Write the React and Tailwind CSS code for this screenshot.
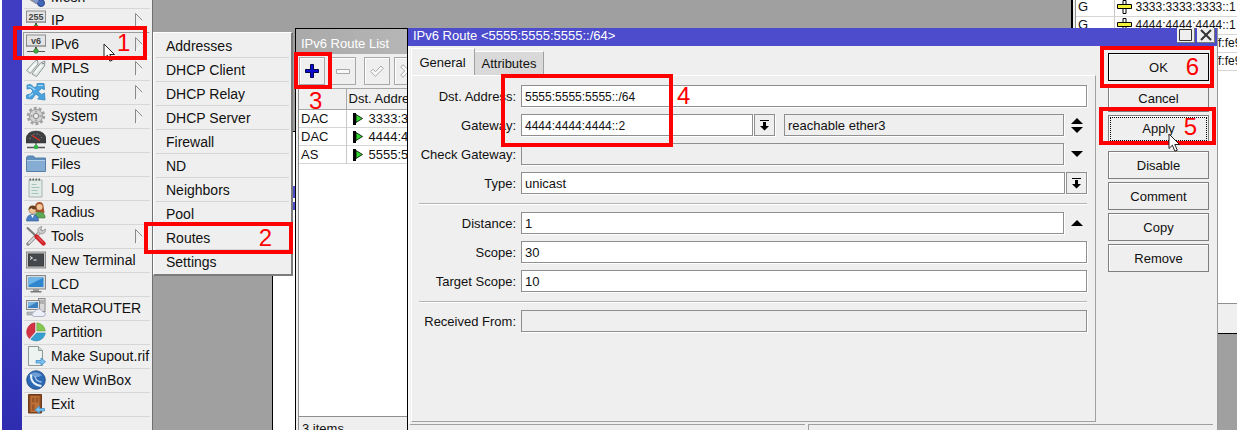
import React from "react";

const RED = "pointer-events-none absolute border-4 border-[#fe0000]";
const DIGIT = "pointer-events-none absolute text-2xl leading-6 text-[#fe0000]";

/* ---------- icons of the main menu ---------- */

function Svg({ children, className = "size-5" }) {
  return (
    <svg viewBox="0 0 20 20" className={className + " shrink-0"} aria-hidden="true">
      {children}
    </svg>
  );
}

function NetBox({ label }) {
  return (
    <Svg>
      <rect x="0.500" y="1" width="19" height="11.500" fill="#e4e4e4" stroke="#8d8d8d" />
      <rect x="1" y="11" width="18" height="2" fill="#a5a5a5" />
      <text x="10" y="9.800" textAnchor="middle" fontSize="9" fontWeight="bold" fill="#444" fontFamily="Liberation Sans, sans-serif">
        {label}
      </text>
      <path d="M10 13v3" stroke="#555" strokeWidth="2" />
      <path d="M1 17.500h18" stroke="#555" />
      <circle cx="10" cy="17" r="2.300" fill="#3fae3f" stroke="#2d6b2d" strokeWidth="0.600" />
    </Svg>
  );
}

const ICONS = {
  mesh: (
    <Svg>
      <path d="M4 12l6 4 6-1M10 16l4-8" stroke="#8a8a8a" strokeWidth="2" fill="none" />
      <circle cx="15" cy="16" r="3.500" fill="#4468b8" stroke="#2a4488" />
      <circle cx="10" cy="13.500" r="2.500" fill="#7f98d0" />
    </Svg>
  ),
  ip: <NetBox label="255" />,
  ipv6: <NetBox label="v6" />,
  mpls: (
    <Svg>
      <path d="M.5 12.500L8.500 3.500l3-1.500.5 4L4.500 15.500z" fill="#e8eeec" stroke="#8d9997" />
      <path d="M6 16L14.500 5l4.500-2-.5 5L10.500 18.500z" fill="#e2e9e7" stroke="#8d9997" />
      <path d="M8.500 15l7-7.500M3.500 12l6-6" stroke="#fff" strokeWidth="1.200" />
      <circle cx="17" cy="5.500" r=".8" fill="#67716f" />
    </Svg>
  ),
  routing: (
    <Svg>
      <path d="M1 3l4-.5 3 3 3-1V1.500l7 0 .5 6-3-1-3.500 3 3.500 3L18.500 11l.5 7-7.500-1 2-2-3.500-3-4 5-5.500-.5V13l4-1 2.500-3-2.500-2.500L1 7z" fill="#4aa3df" stroke="#3a86bd" strokeWidth=".8" />
      <path d="M2 4.500l3 .5 4 3M12 3.500l5 0M3 14.500l4-3" stroke="#a8dbf7" strokeWidth="1.200" fill="none" />
    </Svg>
  ),
  system: (
    <Svg>
      <circle cx="10" cy="10" r="7.800" fill="none" stroke="#a2a2a2" strokeWidth="2.800" strokeDasharray="2.900 2" />
      <circle cx="10" cy="10" r="6.600" fill="#d2d2d2" stroke="#a0a0a0" />
      <circle cx="10" cy="10" r="2.600" fill="#efefef" stroke="#888" />
      <path d="M10 4.500v2M10 13.500v2M4.500 10h2M13.500 10h2" stroke="#999" strokeWidth="1.400" />
    </Svg>
  ),
  queues: (
    <Svg>
      <path d="M0 13V9q1-8 10-8t10 8v4z" fill="#3d3f42" stroke="#28292b" strokeWidth=".5" />
      <path d="M4 9q1-5 6-5t6 5" stroke="#a4a4a4" strokeDasharray="1 2" fill="none" />
      <path d="M6 5.500l8 5" stroke="#e33225" strokeWidth="1.300" />
      <path d="M10 13v3M1 17.500h18" stroke="#555" strokeWidth="1.300" />
      <circle cx="10" cy="17" r="2.300" fill="#34b547" />
    </Svg>
  ),
  files: (
    <Svg>
      <path d="M.5 3.500l1-1.500h6l1.500 2h10.500v13.500H.5z" fill="#5f8fbf" stroke="#5580aa" />
      <path d="M1 6h18v11H1z" fill="#85add4" />
      <path d="M1 6.500h18" stroke="#b5d0e8" />
    </Svg>
  ),
  log: (
    <Svg>
      <path d="M3 2h13v17H3z" fill="#e3ebe7" stroke="#a9b5af" />
      <path d="M3.500 1.500h12" stroke="#5d6864" strokeWidth="2" strokeDasharray="1.500 1.500" />
      <path d="M5.500 6.500h5M5.500 9.500h8M5.500 12.500h6M5.500 15.500h7" stroke="#a5c2be" />
    </Svg>
  ),
  radius: (
    <Svg>
      <path d="M9 10V4q1-4 4.500-4t4 4l1 7z" fill="#a5532c" />
      <circle cx="13.500" cy="5" r="3" fill="#f1c79c" />
      <path d="M9 14q0-4 4.500-4t5.500 4v2H9z" fill="#5faa58" stroke="#3e7a38" strokeWidth=".6" />
      <circle cx="6.500" cy="8" r="3.600" fill="#f1c79c" stroke="#8b5a2a" strokeWidth=".5" />
      <path d="M2.500 8q0-4.500 4-4.500t4 4q-4 0-5-1.500z" fill="#6b4020" />
      <path d="M.5 19q0-6.500 6-6.500t6 6.500z" fill="#4b80c4" stroke="#2d5690" strokeWidth=".6" />
      <path d="M5 13l1.500 3L8 13z" fill="#fff" />
    </Svg>
  ),
  tools: (
    <Svg>
      <path d="M2 18L15 5" stroke="#8a8a8a" strokeWidth="3.400" strokeLinecap="round" />
      <path d="M2.500 17.500L15 5" stroke="#d8d8d8" strokeWidth="1.800" />
      <path d="M12 5.500q-1-4 4-5l-1.500 3 2 1.500L19.500 3q.5 5-5 5z" fill="#cdcdcd" stroke="#888" strokeWidth=".7" />
      <path d="M1 1.500l9.500 9" stroke="#777" strokeWidth="2" />
      <path d="M10.500 10.500l7 7" stroke="#cf2026" strokeWidth="4.200" strokeLinecap="round" />
      <path d="M11 10.500l6 6" stroke="#f27b7b" strokeWidth="1" />
    </Svg>
  ),
  terminal: (
    <Svg>
      <rect x=".5" y="2" width="19" height="16" fill="#c9c9c9" stroke="#8a8a8a" />
      <rect x="2.500" y="4" width="15" height="12" fill="#45484c" stroke="#3c3e41" />
      <path d="M4 6.500l2.500 1.500L4 9.500M7.500 10h3" stroke="#eee" fill="none" />
    </Svg>
  ),
  lcd: (
    <Svg>
      <rect x=".5" y="1.500" width="19" height="13.500" fill="#d5d8da" stroke="#85898c" />
      <rect x="2.500" y="3.500" width="15" height="9.500" fill="#2f86cd" />
      <path d="M2.500 3.500h15L3 11z" fill="#6fb7ea" />
      <path d="M7 15h6v2H7z" fill="#9a9a9a" />
      <path d="M4.500 17h11v1.500h-11z" fill="#777" />
    </Svg>
  ),
  metarouter: (
    <Svg>
      <rect x="12.500" y=".5" width="6.500" height="13" fill="#d9d9d9" stroke="#8a8a8a" />
      <path d="M14 3h4M14 5h4" stroke="#888" />
      <rect x=".5" y="2.500" width="13" height="9" fill="#e1e1e1" stroke="#888" />
      <rect x="2" y="4" width="10" height="6" fill="#3a7fc2" />
      <path d="M2 4h9L2 9z" fill="#7ab5e3" />
      <path d="M1 14h7l-1 3H1z" fill="#b5b9c0" stroke="#8a8e94" strokeWidth=".6" />
      <path d="M8 18.500q-2-.5-2-2.500t3-2.500q1-2.500 4-2.500t4 3q2.500 0 2.500 2t-2.500 2.500z" fill="#eceff7" stroke="#9fa6ba" strokeWidth=".8" />
    </Svg>
  ),
  partition: (
    <Svg>
      <path d="M9 10V.800A9.300 9.300 0 0 0 3.300 16.500z" fill="#d33343" stroke="#9c1f2c" strokeWidth=".5" />
      <path d="M10.800 9V.800A9 9 0 0 1 19.300 9z" fill="#86c653" stroke="#5d9932" strokeWidth=".5" />
      <path d="M10.500 11h8.800a9.300 9.300 0 0 1-14.600 6.200z" fill="#38a0d0" stroke="#1f7aa5" strokeWidth=".5" />
    </Svg>
  ),
  supout: (
    <Svg>
      <path d="M2.500.5h10l4 4v15h-14z" fill="#edf3f1" stroke="#8b9a96" />
      <path d="M12.500.5v4h4" fill="#cdd9d5" stroke="#8b9a96" />
      <path d="M10 14.500h5v-2.500l4.500 3.700-4.500 3.700V17h-5z" stroke="#3f8fce" strokeWidth=".8" fill="#7cc0ee" />
    </Svg>
  ),
  winbox: (
    <Svg>
      <circle cx="10" cy="10" r="9.300" fill="#2c68b3" stroke="#1c4480" strokeWidth=".8" />
      <path d="M3 5q6-5.500 13 0-4 3-7 2T3 5z" fill="#6d9fd6" />
      <path d="M5 4.500q-.5 10 10.500 11.500" stroke="#e8f2fb" strokeWidth="2" fill="none" />
      <path d="M9 6q0 5 6.500 6" stroke="#a8cbee" strokeWidth="1.300" fill="none" />
    </Svg>
  ),
  exit: (
    <Svg>
      <path d="M2.500.5h13v18.500h-13z" fill="#8c4a20" stroke="#6e3c18" />
      <path d="M4.500 2h9v16h-9z" fill="#bd7038" />
      <path d="M6 3.500h2.500v5H6zM9.800 3.500h2.500v5H9.800zM6 10.500h2.500v6H6z" fill="#9b5628" />
      <path d="M18.500 14.500h-5v-2.500L9 15.700l4.500 3.700V17h5z" stroke="#3f8fce" strokeWidth=".8" fill="#7cc0ee" />
    </Svg>
  ),
};

const MENU = [
  ["ip", "IP", true],
  ["ipv6", "IPv6", true],
  ["mpls", "MPLS", true],
  ["routing", "Routing", true],
  ["system", "System", true],
  ["queues", "Queues"],
  ["files", "Files"],
  ["log", "Log"],
  ["radius", "Radius"],
  ["tools", "Tools", true],
  ["terminal", "New Terminal"],
  ["lcd", "LCD"],
  ["metarouter", "MetaROUTER"],
  ["partition", "Partition"],
  ["supout", "Make Supout.rif"],
  ["winbox", "New WinBox"],
  ["exit", "Exit"],
];

const SUBMENU = ["Addresses", "DHCP Client", "DHCP Relay", "DHCP Server", "Firewall", "ND", "Neighbors", "Pool", "Routes", "Settings"];

function Cursor({ className }) {
  return (
    <svg viewBox="0 0 13 20" className={"pointer-events-none absolute h-5 w-[13px] " + className} aria-hidden="true">
      <path d="M1 1v14.500l3.400-3.300 2.500 6 2.400-1-2.500-5.700h4.700z" fill="#fff" stroke="#222" />
    </svg>
  );
}

function MainMenu() {
  return (
    <nav className="absolute inset-y-0 left-0 flex text-sm" aria-label="Main menu">
      <div className="w-0.5 bg-white" />
      <div className="w-5 bg-gradient-to-b from-[#403dc2] from-60% to-[#2e2db0]" />
      <div className="w-[131px] border-r border-[#707070] bg-[#efefef] px-0.5">
        <div className="flex h-[9px] flex-col justify-end overflow-hidden border-b border-[#d6d6d6]">
          <button className="flex h-6 shrink-0 items-center gap-[5px] pt-px pl-0.5 text-left">
            {ICONS.mesh}Mesh
          </button>
        </div>
        {MENU.map(([icon, label, sub]) => (
          <div key={label} className="relative">
            <button
              className={
                "flex h-6 w-full items-center gap-[5px] border-b pb-px pl-0.5 text-left whitespace-nowrap " +
                (icon === "ipv6" ? "border-white bg-[#ececec] shadow-[-1px_-1px_0_#9a9a9a]" : "border-[#d6d6d6]")
              }
            >
              {ICONS[icon]}
              {label}
              {sub && (
                <svg viewBox="0 0 8 15" className="mr-[7px] ml-auto h-[15px] w-2" aria-hidden="true">
                  <path d="M.5 14.500V.5" stroke="#8a8a8a" fill="none" />
                  <path d="M.5.5l7 7" stroke="#8a8a8a" fill="none" />
                  <path d="M7.500 7.500l-7 7" stroke="#fff" fill="none" />
                </svg>
              )}
            </button>
            {icon === "ipv6" && (
              <>
                <Cursor className="top-2.5 left-[79px]" />
                <span className={RED + " -top-[7px] -right-[-3px] -bottom-[3px] -left-[11px]"} />
                <span className={DIGIT + " -top-0.5 left-[93px]"}>1</span>
              </>
            )}
          </div>
        ))}
      </div>
    </nav>
  );
}

function SubMenu() {
  return (
    <div className="absolute top-8 left-[153px] w-[140px] border-t border-r-2 border-b-2 border-l border-t-white border-r-[#7b7b7b] border-b-[#7b7b7b] border-l-white bg-[#efefef] px-0.5 pt-px text-sm">
      {SUBMENU.map((s) => (
        <div key={s} className="relative">
          <button className={"flex h-6 w-full items-center border-b pl-2.5 pt-px text-left " + (s === "Settings" ? "border-transparent" : "border-[#d6d6d6]")}>{s}</button>
          {s === "Routes" && (
            <>
              <span className={RED + " -top-1 -right-1 -bottom-1 -left-3"} />
              <span className={DIGIT + " top-0 right-[17px]"}>2</span>
            </>
          )}
        </div>
      ))}
    </div>
  );
}

/* ---------- route list ---------- */

const TOOL = "flex h-7 w-[26px] shrink-0 items-center justify-center border border-[#a8a8a8] shadow-[inset_1px_1px_0_#fff]";

function RouteList() {
  const rows = [
    ["DAC", "3333:3333:3333::/64"],
    ["DAC", "4444:4444:4444::/64"],
    ["AS", "5555:5555:5555::/64"],
  ];
  return (
    <section className="absolute top-7 bottom-0 left-[295px] flex w-[240px] flex-col border-t border-l border-black bg-[#efefef]">
      <h2 className="flex h-[25px] shrink-0 items-center bg-gradient-to-r from-[#a9a9a9] to-[#c6c6c6] pt-1 pl-[5px] text-white">IPv6 Route List</h2>
      <div className="flex h-[34px] shrink-0 items-center gap-1 pl-[3px]">
        <div className="relative mr-px flex">
          <button className={TOOL} aria-label="Add">
            <svg viewBox="0 0 14 14" className="size-3.5" aria-hidden="true">
              <path d="M5.500.5h3v5h5v3h-5v5h-3v-5h-5v-3h5z" fill="#0a0ad0" stroke="#00004a" />
            </svg>
          </button>
          <span className={RED + " -top-[5px] -right-[7px] -bottom-[4px] -left-[5px]"} />
        </div>
        <button className={TOOL} aria-label="Remove">
          <svg viewBox="0 0 14 5" className="h-[5px] w-3.5" aria-hidden="true">
            <path d="M.5.5h13v4H.5z" fill="#f8f8f8" stroke="#a8a8a8" />
          </svg>
        </button>
        <button className={TOOL + " ml-1"} aria-label="Enable">
          <svg viewBox="0 0 14 12" className="h-3 w-3.5" aria-hidden="true">
            <path d="M.7 6.500L3 4.200l2.500 2.500L11 1l2.300 2.300-7.800 8z" fill="#f8f8f8" stroke="#a8a8a8" />
          </svg>
        </button>
        <button className={TOOL} aria-label="Disable">
          <svg viewBox="0 0 14 14" className="size-3.5" aria-hidden="true">
            <path d="M3 .7l4 4 4-4L13.300 3l-4 4 4 4-2.300 2.300-4-4-4 4L.7 11l4-4-4-4z" fill="#f8f8f8" stroke="#a8a8a8" />
          </svg>
        </button>
      </div>
      <div className="ml-0.5 flex-1 border-l border-[#8f8f8f] bg-white">
        <table className="w-full table-fixed border-collapse">
          <thead>
            <tr className="h-[21px] border-y border-[#a8a8a8] bg-[#efefef]">
              <th className="relative w-[47px] border-r border-[#a8a8a8] p-0">
                <span className={DIGIT + " top-0 left-2.5 font-normal"}>3</span>
              </th>
              <th className="p-0 pl-0.5 text-left font-normal">Dst. Address</th>
            </tr>
          </thead>
          <tbody>
            {rows.map(([flag, dst]) => (
              <tr key={dst} className="h-[18px] border-b border-[#d6d6d6]">
                <td className="border-r border-[#c9c9c9] p-0 pl-0.5 leading-4">{flag}</td>
                <td className="p-0 pl-1.5 leading-4">
                  <span className="flex items-center gap-1.5">
                    <svg viewBox="0 0 10 12" className="h-3 w-2.5 shrink-0" aria-hidden="true">
                      <path d="M0 0h3v12H0z" />
                      <path d="M3 1.500l6.500 4L3 9.500z" fill="#2fd72f" stroke="#000" strokeWidth=".8" />
                    </svg>
                    {dst}
                  </span>
                </td>
              </tr>
            ))}
          </tbody>
        </table>
      </div>
      <footer className="ml-0.5 flex h-3.5 shrink-0 items-start overflow-hidden border-t border-l border-[#8f8f8f] pt-0.5 pl-[3px]">3 items</footer>
    </section>
  );
}

/* ---------- neighbouring windows ---------- */

function AddressList() {
  const rows = [
    ["G", "3333:3333:3333::1"],
    ["G", "4444:4444:4444::1"],
    ["DL", "fe80::2:d4cf:6dff:fe9"],
    ["DL", "fe80::2:d4cf:6dff:fe9"],
  ];
  return (
    <section className="absolute top-0 right-0 left-[1071px] flex h-[334px] flex-col overflow-hidden border-b border-l-2 border-black bg-[#efefef] pl-0.5">
      <div className="mb-[29px] min-h-0 flex-1 overflow-hidden border-b border-l border-[#8f8f8f] bg-white">
        <table className="-mt-0.5 w-full table-fixed border-collapse">
          <tbody>
            {rows.map(([flag, addr], i) => (
              <tr key={i} className="h-[18px] border-b border-[#d6d6d6]">
                <td className="w-[38px] border-r border-[#c9c9c9] p-0 pl-0.5 leading-4">{flag}</td>
                <td className="p-0 pl-0.5 leading-4">
                  <span className="flex items-center gap-1 text-xs leading-4 whitespace-nowrap">
                    <svg viewBox="0 0 15 14" className="h-3.5 w-[15px] shrink-0" aria-hidden="true">
                      <path d="M6 .5h3v13H6z" fill="#fff" stroke="#000" />
                      <path d="M.5 4.500h14v4H.5z" fill="#f6f23a" stroke="#000" />
                    </svg>
                    {addr}
                  </span>
                </td>
              </tr>
            ))}
          </tbody>
        </table>
      </div>
    </section>
  );
}

function BackWindow() {
  return (
    <section className="absolute top-[131px] bottom-0 left-[272px] flex w-[100px] flex-col gap-1 border-t border-l border-black bg-white pt-[54px]">
      <div className="h-3 bg-[#4c4ccc]" />
      <div className="h-2 bg-[#4c4ccc]" />
    </section>
  );
}

/* ---------- route dialog ---------- */

const BOX = "h-[22px] min-w-0 rounded-none border border-[#8f8f8f] px-[3px] pt-px shadow-[1px_1px_0_#fff] outline-none";
const WHITE = BOX + " bg-white";
const GREY = BOX + " bg-[#efefef]";

function DropButton({ label }) {
  return (
    <button aria-label={label} className="flex h-[22px] w-[21px] shrink-0 items-center justify-center border border-[#8f8f8f] shadow-[1px_1px_0_#fff]">
      <svg viewBox="0 0 9 11" className="h-[11px] w-[9px]" aria-hidden="true">
        <path d="M0 0h9v1H0zM3 2h3v4h3L4.500 10.500 0 6h3z" />
      </svg>
    </button>
  );
}

function Arrows({ up, down, label }) {
  return (
    <button aria-label={label} className="flex h-[22px] w-[23px] shrink-0 flex-col items-center justify-center gap-[3px] pl-[3px]">
      {up && (
        <svg viewBox="0 0 12 6" className="h-1.5 w-3" aria-hidden="true">
          <path d="M6 0l6 6H0z" />
        </svg>
      )}
      {down && (
        <svg viewBox="0 0 12 6" className="h-1.5 w-3" aria-hidden="true">
          <path d="M0 0h12L6 6z" />
        </svg>
      )}
    </button>
  );
}

function Row({ id, label, children }) {
  return (
    <div className="flex items-center">
      <label htmlFor={id} className="mr-[5px] w-[104px] shrink-0 pt-px text-right whitespace-nowrap">
        {label}
      </label>
      {children}
    </div>
  );
}

const Rule = () => <hr className="mt-0.5 ml-[7px] h-0.5 border-t border-b border-t-[#b4b4b4] border-b-white" />;

const ACTION = "flex h-7 w-full items-center justify-center border bg-[#efefef] pt-px shadow-[inset_1px_1px_0_#fff]";

function RouteDialog() {
  return (
    <section className="absolute top-7 right-[19px] bottom-0 left-[407px] flex flex-col border-r border-l border-r-[#9a9a9a] border-l-black bg-[#efefef]">
      <header className="flex h-[18px] shrink-0 items-start justify-between bg-[#4c4ccc] pr-0.5 pl-[5px]">
        <h2 className="leading-4 text-white">IPv6 Route &lt;5555:5555:5555::/64&gt;</h2>
        <div className="flex gap-0.5">
          <button aria-label="Maximize" className="flex h-[15px] w-[18px] items-center justify-center border-r border-b border-[#777] bg-[#efefef]">
            <svg viewBox="0 0 13 12" className="h-3 w-[13px]" aria-hidden="true">
              <path d="M.5.5h12v11H.5z" fill="none" stroke="#333" />
            </svg>
          </button>
          <button aria-label="Close" className="flex h-[15px] w-[18px] items-center justify-center border-r border-b border-[#777] bg-[#efefef]">
            <svg viewBox="0 0 12 12" className="size-3" aria-hidden="true">
              <path d="M1 1l10 10M11 1L1 11" stroke="#333" strokeWidth="2" />
            </svg>
          </button>
        </div>
      </header>
      <div className="flex min-h-0 flex-1 gap-3 border-l-2 border-white/60 pr-2 pl-px">
        <div className="flex min-w-0 flex-1 flex-col pt-0.5">
          <div className="flex h-[27px] shrink-0 items-end" role="tablist">
            <button role="tab" aria-selected="true" className="relative -mb-px h-7 w-16 border-t border-r border-l border-t-white border-r-[#a0a0a0] border-l-white bg-[#efefef] pr-px">
              General
            </button>
            <button role="tab" aria-selected="false" className="h-6 w-[69px] border-t border-r border-t-white border-r-[#a0a0a0] bg-[#d9d9d9] pt-px">
              Attributes
            </button>
          </div>
          <form className="relative mb-[2px] flex flex-1 flex-col gap-[7px] border border-t-white border-r-[#a0a0a0] border-b-[#a0a0a0] border-l-white pt-[9px] pr-2" onSubmit={(e) => e.preventDefault()}>
            <Row id="dst" label="Dst. Address:">
              <input id="dst" className={WHITE + " flex-1 text-xs"} defaultValue="5555:5555:5555::/64" />
            </Row>
            <Row id="gw" label="Gateway:">
              <input id="gw" className={WHITE + " w-[232px] text-xs"} defaultValue="4444:4444:4444::2" />
              <span className="mr-[9px] ml-px flex">
                <DropButton label="Choose gateway" />
              </span>
              <input aria-label="Gateway status" readOnly className={GREY + " flex-1"} defaultValue="reachable ether3" />
              <Arrows up down label="Add or remove gateway" />
            </Row>
            <Row id="chk" label="Check Gateway:">
              <select id="chk" className={GREY + " flex-1 appearance-none"}>
                <option></option>
              </select>
              <Arrows down label="Show check gateway" />
            </Row>
            <Row id="type" label="Type:">
              <select id="type" className={WHITE + " mr-px flex-1 appearance-none"}>
                <option>unicast</option>
              </select>
              <DropButton label="Choose type" />
            </Row>
            <Rule />
            <Row id="dist" label="Distance:">
              <input id="dist" className={WHITE + " flex-1"} defaultValue="1" />
              <Arrows up label="Hide distance" />
            </Row>
            <Row id="scope" label="Scope:">
              <input id="scope" className={WHITE + " flex-1"} defaultValue="30" />
            </Row>
            <Row id="tscope" label="Target Scope:">
              <input id="tscope" className={WHITE + " flex-1"} defaultValue="10" />
            </Row>
            <Rule />
            <Row id="from" label="Received From:">
              <input id="from" readOnly className={GREY + " flex-1"} />
            </Row>
            <span className={RED + " -top-0.5 left-[89px] h-[73px] w-[172px]"} />
            <span className={DIGIT + " top-2 left-[265px]"}>4</span>
          </form>
        </div>
        <div className="flex w-[101px] shrink-0 flex-col gap-[3px] pt-[7px]">
          <div className="relative z-10">
            <button className={ACTION + " border-black"}>OK</button>
            <span className={RED + " -top-[7px] -right-[5px] -bottom-[7px] -left-2"} />
            <span className={DIGIT + " top-0.5 right-[10px]"}>6</span>
          </div>
          <button className={ACTION + " border-[#7f7f7f]"}>Cancel</button>
          <div className="relative z-10 mb-[5px]">
            <button className={ACTION + " border-[#7f7f7f] px-px pb-px"}>
              <span className="flex size-full items-center justify-center border border-dotted border-black">Apply</span>
            </button>
            <span className={RED + " -top-2 -right-[7px] -bottom-0.5 -left-[9px]"} />
            <span className={DIGIT + " top-0 right-3"}>5</span>
            <Cursor className="top-[18px] left-[60px]" />
          </div>
          {["Disable", "Comment", "Copy", "Remove"].map((a) => (
            <button key={a} className={ACTION + " border-[#7f7f7f]"}>
              {a}
            </button>
          ))}
        </div>
      </div>
      <footer className="mr-1 ml-0.5 flex h-1.5 shrink-0 gap-[3px]">
        <div className="flex-[49] border-t border-[#a0a0a0]" />
        <div className="flex-[50] border-t border-l border-[#a0a0a0]" />
      </footer>
    </section>
  );
}

export default function App() {
  return (
    <main className="relative h-screen w-full overflow-hidden bg-[#a0a0a0] font-['Liberation_Sans',Arial,sans-serif] text-[13px] text-[#111]">
      <BackWindow />
      <AddressList />
      <MainMenu />
      <SubMenu />
      <RouteList />
      <RouteDialog />
    </main>
  );
}
